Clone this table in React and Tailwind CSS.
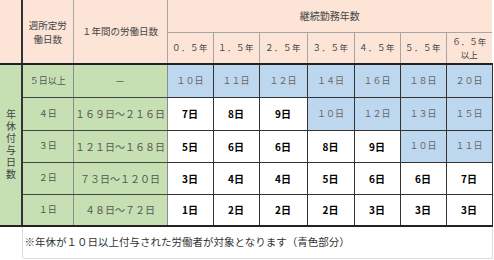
import React from "react";

const years = ["０．５年", "１．５年", "２．５年", "３．５年", "４．５年", "５．５年"];

const rows = [
  { week: "５日以上", range: "－", days: ["１０日", "１１日", "１２日", "１４日", "１６日", "１８日", "２０日"], blueFrom: 0, h: "h-[33px]" },
  { week: "４日", range: "１６９日～２１６日", days: ["7日", "8日", "9日", "１０日", "１２日", "１３日", "１５日"], blueFrom: 3, h: "h-[33px]" },
  { week: "３日", range: "１２１日～１６８日", days: ["5日", "6日", "6日", "8日", "9日", "１０日", "１１日"], blueFrom: 5, h: "h-[32px]" },
  { week: "２日", range: "７３日～１２０日", days: ["3日", "4日", "4日", "5日", "6日", "6日", "7日"], blueFrom: 7, h: "h-[32px]" },
  { week: "１日", range: "４８日～７２日", days: ["1日", "2日", "2日", "2日", "3日", "3日", "3日"], blueFrom: 7, h: "h-[32px]" },
];

function App() {
  return (
    <div className="w-[494px] h-[260px] bg-white overflow-hidden" style={{ fontFamily: '"Noto Sans CJK JP", "Noto Sans", sans-serif' }}>
      <table className="table-fixed border-collapse w-[492px]">
        <colgroup>
          <col className="w-[22px]" />
          <col className="w-[51px]" />
          <col className="w-[94px]" />
          <col className="w-[46px]" />
          <col className="w-[46px]" />
          <col className="w-[48px]" />
          <col className="w-[47px]" />
          <col className="w-[46px]" />
          <col className="w-[46px]" />
          <col className="w-[46px]" />
        </colgroup>
        <tbody>
          <tr className="h-[32px]">
            <td rowSpan={2} className="bg-[#fce4d6] border-r-2 border-r-[#333] border-b-2 border-b-[#222]"></td>
            <td rowSpan={2} className="bg-[#fce4d6] border border-[#a6a6a6] border-t-0 border-b-2 border-b-[#222] text-center text-[9.5px] leading-[14px] text-[#444]">
              週所定労<br />働日数
            </td>
            <td rowSpan={2} className="bg-[#fce4d6] border border-[#a6a6a6] border-t-0 border-b-2 border-b-[#222] text-center text-[9.5px] text-[#444]">
              １年間の労働日数
            </td>
            <td colSpan={7} className="bg-[#fce4d6] border border-[#a6a6a6] border-t-0 border-r-0 text-center text-[10px] text-[#444]">
              継続勤務年数
            </td>
          </tr>
          <tr className="h-[32px]">
            {years.map((y) => (
              <td key={y} className="bg-[#fce4d6] border border-[#a6a6a6] border-b-2 border-b-[#222] text-center text-[8.5px] tracking-[0.5px] text-[#444]">
                {y}
              </td>
            ))}
            <td className="bg-[#fce4d6] border border-[#a6a6a6] border-r-0 border-b-2 border-b-[#222] text-center text-[8.5px] leading-[12.5px] text-[#444]">
              ６．５年<br />以上
            </td>
          </tr>
          {rows.map((r, i) => (
            <tr key={r.week} className={r.h}>
              {i === 0 && (
                <td rowSpan={5} className="bg-[#c6e0b4] border-r-2 border-r-[#333] border-b-2 border-b-[#222] align-middle">
                  <div className="flex justify-center">
                    <span className="[writing-mode:vertical-rl] tracking-[2px] text-[10px] leading-[12px] text-[#444]">
                      年休付与日数
                    </span>
                  </div>
                </td>
              )}
              <td className={`bg-[#c6e0b4] border-r border-r-[#8c8c8c] border-t border-t-[#444] text-center text-[9px] text-[#555] ${i === 4 ? "border-b-2 border-b-[#222]" : "border-b border-b-[#444]"}`}>
                {r.week}
              </td>
              <td className={`bg-[#c6e0b4] border-r border-r-[#8c8c8c] border-t border-t-[#444] text-center text-[10px] text-[#555] ${i === 4 ? "border-b-2 border-b-[#222]" : "border-b border-b-[#444]"}`}>
                {r.range}
              </td>
              {r.days.map((d, j) => {
                const blue = j >= r.blueFrom;
                return (
                  <td
                    key={j}
                    className={`border-[#333] border-t border-l border-r text-center ${i === 4 ? "border-b-2 border-b-[#222]" : "border-b"} ${
                      blue ? "bg-[#bdd7ee] text-[9px] text-[#666]" : "bg-white text-[10px] font-bold text-black"
                    }`}
                  >
                    {d}
                  </td>
                );
              })}
            </tr>
          ))}
          <tr className="h-[32px]">
            <td className="bg-white border-r border-r-[#dcdcdc] border-b border-b-white"></td>
            <td colSpan={9} className="bg-white border border-[#dcdcdc] border-t-0 pl-[2px] text-left text-[10.5px] text-[#333]">
              ※年休が１０日以上付与された労働者が対象となります（青色部分）
            </td>
          </tr>
        </tbody>
      </table>
    </div>
  );
}

export default App;
